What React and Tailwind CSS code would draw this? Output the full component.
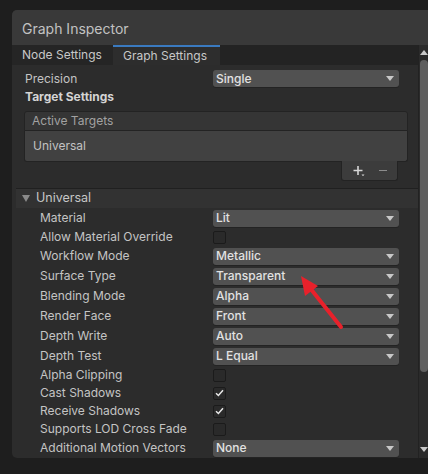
import React from "react";

const Caret = () => (
  <svg width="8" height="5" viewBox="0 0 8 5" className="shrink-0">
    <path d="M0 0 H8 L4 5 Z" fill="#c8c8c8" />
  </svg>
);

const Dropdown = ({ value }) => (
  <div className="w-[186px] h-[17px] rounded-[3px] bg-[#515151] flex items-center justify-between pl-[3px] pr-[5px] text-[12px] font-medium text-[#e2e2e2] shadow-[0_1px_0_#232323]">
    <span className="leading-none">{value}</span>
    <Caret />
  </div>
);

const Checkbox = ({ checked }) => (
  <div className="w-[13px] h-[13px] rounded-[2px] bg-[#2a2a2a] border border-[#1b1b1b] flex items-center justify-center">
    {checked && (
      <svg width="9" height="8" viewBox="0 0 9 8">
        <path d="M1 4.2 L3.4 6.5 L8 1.3" stroke="#e8e8e8" strokeWidth="1.5" fill="none" />
      </svg>
    )}
  </div>
);

const rows = [
  { label: "Material", type: "dd", value: "Lit" },
  { label: "Allow Material Override", type: "cb" },
  { label: "Workflow Mode", type: "dd", value: "Metallic" },
  { label: "Surface Type", type: "dd", value: "Transparent" },
  { label: "Blending Mode", type: "dd", value: "Alpha" },
  { label: "Render Face", type: "dd", value: "Front" },
  { label: "Depth Write", type: "dd", value: "Auto" },
  { label: "Depth Test", type: "dd", value: "L Equal" },
  { label: "Alpha Clipping", type: "cb" },
  { label: "Cast Shadows", type: "cb", checked: true },
  { label: "Receive Shadows", type: "cb", checked: true },
  { label: "Supports LOD Cross Fade", type: "cb" },
  { label: "Additional Motion Vectors", type: "dd", value: "None" },
  { label: "", type: "cb" },
];

const App = () => {
  return (
    <div
      className="relative w-[428px] h-[474px] overflow-hidden bg-[#1e1e1e] pt-[10px] pl-[12px]"
      style={{ fontFamily: "Inter, 'Noto Sans', sans-serif" }}
    >
      <div className="h-[448px] rounded-l-[5px] overflow-hidden bg-[#2c2c2c] flex flex-col">
        {/* title */}
        <div className="h-[35px] shrink-0 bg-[#393939] flex items-center pl-[10px] pt-[1px] text-[14px] text-[#c2c2c2]">
          Graph Inspector
        </div>

        <div className="flex flex-1 min-h-0">
          {/* main column */}
          <div className="w-[406px] flex flex-col">
            {/* tabs */}
            <div className="h-[20px] shrink-0 flex bg-[#232323] text-[12px] text-[#c8c8c8]">
              <div className="w-[101px] flex items-center pl-[10px] bg-[#252525]">Node Settings</div>
              <div className="w-[107px] flex items-center pl-[10px] bg-[#2d2d2d] border-t-2 border-[#3a7ac0]">
                Graph Settings
              </div>
            </div>

            {/* content */}
            <div className="flex-1 pt-[4px] text-[12px] text-[#c4c4c4]">
              <div className="h-[19px] flex items-center pl-[13px]">
                <span className="w-[188px]">Precision</span>
                <Dropdown value="Single" />
              </div>
              <div className="h-[18px] flex items-center pl-[13px] font-bold text-[#d4d4d4]">
                Target Settings
              </div>

              {/* active targets list */}
              <div className="mt-[5px] ml-[12px] w-[384px]">
                <div className="h-[20px] flex items-center pl-[7px] bg-[#353535] border border-[#232323] rounded-t-[3px] text-[#a2a2a2]">
                  Active Targets
                </div>
                <div className="h-[31px] flex items-center pl-[8px] bg-[#414141] border border-t-0 border-[#232323] rounded-b-[3px] text-[#c2c2c2]">
                  Universal
                </div>
                <div className="flex justify-end pr-[10px]">
                  <div className="-mt-[1px] w-[57px] h-[20px] bg-[#3c3c3c] border border-t-0 border-[#232323] rounded-b-[3px] flex items-center justify-center gap-[14px]">
                    <svg width="12" height="12" viewBox="0 0 12 12">
                      <path d="M5 1 V10 M0.5 5.5 H9.5" stroke="#d6d6d6" strokeWidth="1.6" />
                      <path d="M8.5 9.5 H11.5 L10 11.2 Z" fill="#d6d6d6" />
                    </svg>
                    <div className="w-[8px] h-[1.5px] bg-[#8c8c8c]" />
                  </div>
                </div>
              </div>

              {/* foldout */}
              <div className="mt-[7px] ml-[4px] h-[20px] bg-[#323232] border-t border-[#202020] flex items-center pl-[6px] text-[#c6c6c6] text-[12.5px]">
                <svg width="8" height="7" viewBox="0 0 8 7" className="mr-[6px]">
                  <path d="M0 0 H8 L4 7 Z" fill="#8a8a8a" />
                </svg>
                Universal
              </div>

              <div>
                {rows.map((r, i) => (
                  <div
                    key={i}
                    className={`flex items-center pl-[28px] ${r.type === "dd" ? "h-[20px]" : "h-[18px]"}`}
                  >
                    <span className="w-[173px] shrink-0">{r.label}</span>
                    {r.type === "dd" ? <Dropdown value={r.value} /> : <Checkbox checked={r.checked} />}
                  </div>
                ))}
              </div>
            </div>
          </div>

          {/* scrollbar */}
          <div className="w-[10px] bg-[#2b2b2b] border-l border-[#222] flex flex-col items-center pt-[5px] pb-[4px]">
            <svg width="8" height="5" viewBox="0 0 8 5">
              <path d="M0 5 H8 L4 0 Z" fill="#c8c8c8" />
            </svg>
            <div className="mt-[5px] w-[8px] h-[312px] rounded-[4px] bg-[#5e5e5e]" />
            <div className="flex-1" />
            <svg width="8" height="5" viewBox="0 0 8 5" className="mb-[2px]">
              <path d="M0 0 H8 L4 5 Z" fill="#c8c8c8" />
            </svg>
          </div>
        </div>
      </div>

      {/* red annotation arrow */}
      <svg className="absolute left-0 top-0 pointer-events-none" width="428" height="474">
        <line x1="341" y1="327" x2="310" y2="288" stroke="#e8212b" strokeWidth="4" strokeLinecap="round" />
        <path d="M301 276 L318 286 L305 296 Z" fill="#e8212b" />
      </svg>
    </div>
  );
};

export default App;
